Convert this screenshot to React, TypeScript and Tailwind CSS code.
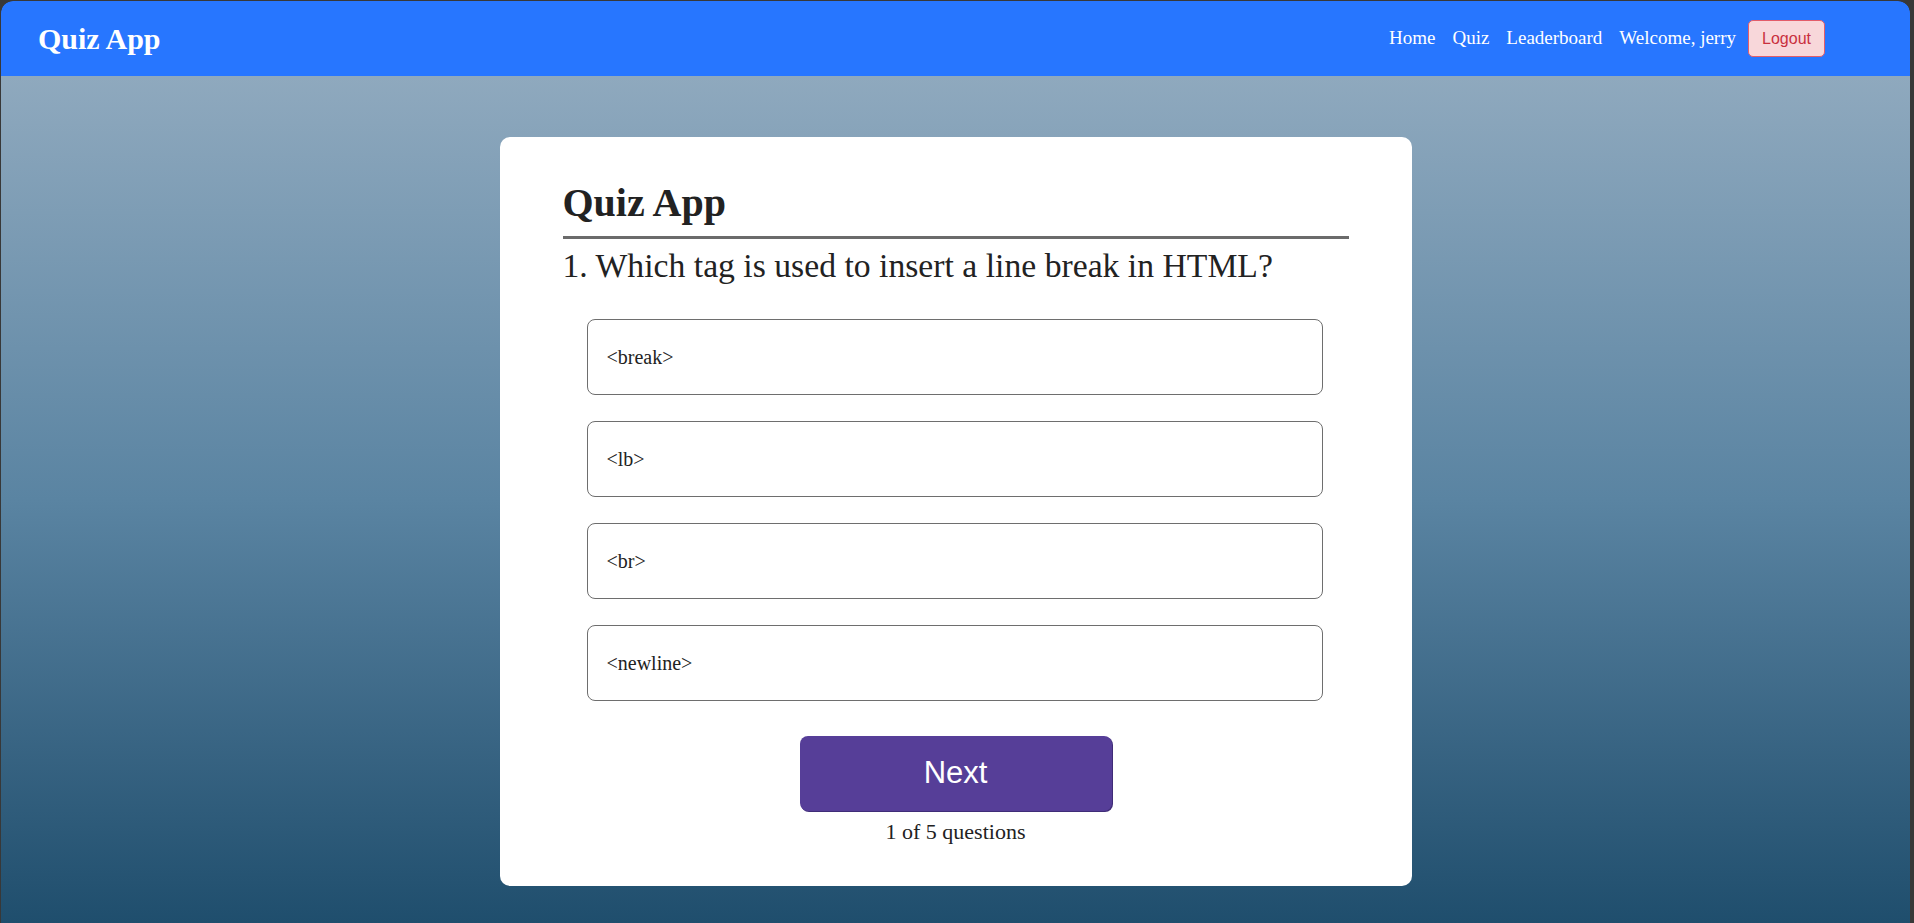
import React from "react";

const options = ["<break>", "<lb>", "<br>", "<newline>"];

const serif = { fontFamily: '"Liberation Serif", "Times New Roman", serif' };

function Navbar() {
  return (
    <nav className="h-[75px] shrink-0 bg-[#2776ff] rounded-t-[12px] flex items-center justify-between pl-[37px] pr-[85px]">
      <div className="text-[30px] font-bold text-white leading-none" style={serif}>
        Quiz App
      </div>
      <div className="flex items-center gap-[12px] text-[19px] text-white" style={serif}>
        <ul className="flex items-center gap-[17px]">
          <li>Home</li>
          <li>Quiz</li>
          <li>Leaderboard</li>
          <li>Welcome, jerry</li>
        </ul>
        <button className="h-[37px] w-[77px] rounded-[5px] border border-[#e35d6a] bg-[#f8d7da] text-[#c9303e] text-[16px] font-['Liberation_Sans',Arial,sans-serif]">
          Logout
        </button>
      </div>
    </nav>
  );
}

function QuizCard() {
  return (
    <div className="w-[912px] bg-white rounded-[10px] pt-[43px] pb-[42px] px-[63px] text-[#222]" style={serif}>
      <h1 className="text-[40px] leading-[46px] font-bold pb-[10px] border-b-[3px] border-[#6b6b6b]">
        Quiz App
      </h1>
      <h2 className="mt-[7px] text-[33.7px] leading-[39px] font-normal">
        1. Which tag is used to insert a line break in HTML?
      </h2>
      <div className="mt-[34px] ml-[24px] mr-[26px] flex flex-col gap-[26px]">
        {options.map((opt) => (
          <div
            key={opt}
            className="h-[76px] border border-[#6e6e6e] rounded-[8px] flex items-center pl-[19px] text-[20px] text-[#222] cursor-pointer"
          >
            {opt}
          </div>
        ))}
      </div>
      <div className="mt-[35px] flex flex-col items-center">
        <button className="w-[312px] h-[75px] rounded-[8px] bg-[#563e98] shadow-[1px_1px_0_#3f2c77] text-white text-[31px] font-['Liberation_Sans',Arial,sans-serif]">
          Next
        </button>
        <p className="mt-[8px] text-[22px] leading-[25px] text-[#222]">1 of 5 questions</p>
      </div>
    </div>
  );
}

export default function App() {
  return (
    <div className="h-[923px] w-full bg-[#383838] pt-px pl-px pr-[4px] overflow-hidden">
      <div className="h-full flex flex-col rounded-t-[12px] overflow-hidden">
        <Navbar />
        <main className="flex-1 bg-gradient-to-b from-[#8fa9be] via-[#5a84a2] to-[#1f4e6d] flex justify-center items-start pt-[61px]">
          <QuizCard />
        </main>
      </div>
    </div>
  );
}
